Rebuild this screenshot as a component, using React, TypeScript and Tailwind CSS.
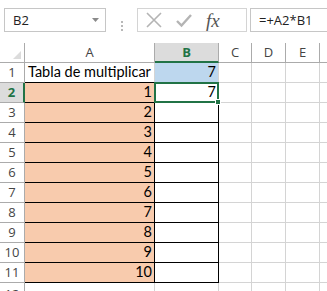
import React from "react";

const cols = "grid-cols-[25px_130px_64px_33px_34px_34px_7px]";
const values = [1, 2, 3, 4, 5, 6, 7, 8, 9, 10];
const cellFont = "font-['Lato',sans-serif] text-[14.5px] leading-none text-black whitespace-nowrap";

function Grip() {
  return (
    <div className="flex w-[31px] flex-col items-center justify-center gap-[2px]">
      <span className="h-[2px] w-[2px] bg-[#b8b8b8]" />
      <span className="h-[2px] w-[2px] bg-[#b8b8b8]" />
      <span className="h-[2px] w-[2px] bg-[#b8b8b8]" />
    </div>
  );
}

function FormulaBar() {
  return (
    <div className="flex h-[43px] pt-[8px] pl-[4px]">
      <div className="relative flex h-[24px] w-[102px] items-center border border-[#c6c6c6] pl-[8px] text-[13px] leading-none text-[#222]">
        B2
        <svg className="absolute right-[6px] top-[9px]" width="7" height="4" viewBox="0 0 7 4">
          <path d="M0 0h7L3.5 4z" fill="#8a8a8a" />
        </svg>
      </div>
      <Grip />
      <div className="flex h-[24px] w-[110px] items-center border border-[#d4d4d4]">
        <svg className="ml-[7px]" width="18" height="18" viewBox="0 0 18 18">
          <path d="M2 2l14 14M16 2L2 16" stroke="#b4b4b4" strokeWidth="1.6" />
        </svg>
        <svg className="ml-[12px]" width="18" height="18" viewBox="0 0 18 18">
          <path d="M2 10l4.5 4.5L16 4" stroke="#b4b4b4" strokeWidth="2.4" fill="none" />
        </svg>
        <span className="ml-[13px] font-['Liberation_Serif',serif] text-[19px] italic leading-none text-[#555]">
          fx
        </span>
      </div>
      <div className="ml-[3px] flex h-[24px] flex-1 items-center border border-r-0 border-[#c6c6c6] pl-[8px] text-[13px] leading-none text-[#222]">
        =+A2*B1
      </div>
    </div>
  );
}

function ColumnHeaders() {
  return (
    <div className={`grid h-[20px] ${cols} text-[13px] leading-none text-[#444]`}>
      <div className="relative border-r border-b border-[#ababab]">
        <svg className="absolute right-[3px] bottom-[3px]" width="8" height="8" viewBox="0 0 8 8">
          <path d="M8 0v8H0z" fill="#dcdcdc" />
        </svg>
      </div>
      <div className="flex items-center justify-center border-r border-b border-[#ababab]">A</div>
      <div className="flex items-center justify-center border-r border-b-2 border-[#ababab] border-b-[#217346] bg-[#dcdcdc] font-bold text-[#217346]">
        B
      </div>
      <div className="flex items-center justify-center border-r border-b border-[#ababab]">C</div>
      <div className="flex items-center justify-center border-r border-b border-[#ababab]">D</div>
      <div className="flex items-center justify-center border-r border-b border-[#ababab]">E</div>
      <div className="border-b border-[#ababab]" />
    </div>
  );
}

function Blank() {
  return (
    <>
      <div className="border-r border-b border-[#d4d4d4]" />
      <div className="border-r border-b border-[#d4d4d4]" />
      <div className="border-r border-b border-[#d4d4d4]" />
      <div className="border-b border-[#d4d4d4]" />
    </>
  );
}

function Row({ n, value }: { n: number; value: number }) {
  const selected = n === 2;
  return (
    <div className={`grid h-[20px] ${cols}`}>
      <div
        className={
          selected
            ? "flex items-center justify-center border-r-2 border-b border-[#ababab] border-r-[#217346] bg-[#dcdcdc] text-[13px] leading-none font-bold text-[#217346]"
            : "flex items-center justify-center border-r border-b border-[#ababab] text-[13px] leading-none text-[#444]"
        }
      >
        {n}
      </div>
      <div className={`flex items-center justify-end border-r border-b border-black bg-[#f8cbad] pr-[2px] ${cellFont}`}>
        {value}
      </div>
      {selected ? (
        <div className={`relative -mt-[1px] -ml-[1px] flex h-[21px] items-center justify-end border-2 border-[#217346] pr-[1px] ${cellFont}`}>
          7
          <span className="absolute -right-[4px] -bottom-[4px] h-[6px] w-[6px] border border-white bg-[#217346]" />
        </div>
      ) : (
        <div className="border-r border-b border-black" />
      )}
      <Blank />
    </div>
  );
}

export default function App() {
  return (
    <div className="h-[291px] w-[327px] overflow-hidden bg-white font-['Open_Sans',sans-serif]">
      <FormulaBar />
      <ColumnHeaders />
      <div className={`grid h-[20px] ${cols}`}>
        <div className="flex items-center justify-center border-r border-b border-[#ababab] text-[13px] leading-none text-[#444]">
          1
        </div>
        <div className={`flex items-center border-r border-b border-[#d4d4d4] border-b-black pl-[3px] ${cellFont}`}>
          Tabla de multiplicar
        </div>
        <div className={`flex items-center justify-end border-r border-b border-[#d4d4d4] bg-[#bdd7ee] pr-[2px] ${cellFont}`}>
          7
        </div>
        <Blank />
      </div>
      {values.map((v, i) => (
        <Row key={i} n={i + 2} value={v} />
      ))}
      <div className={`grid h-[20px] ${cols}`}>
        <div className="flex items-start justify-center border-r border-[#ababab] pt-[5px] text-[13px] leading-none text-[#444]">
          12
        </div>
        <div className="border-r border-[#d4d4d4]" />
        <div className="border-r border-[#d4d4d4]" />
        <div className="border-r border-[#d4d4d4]" />
        <div className="border-r border-[#d4d4d4]" />
        <div className="border-r border-[#d4d4d4]" />
        <div />
      </div>
    </div>
  );
}
